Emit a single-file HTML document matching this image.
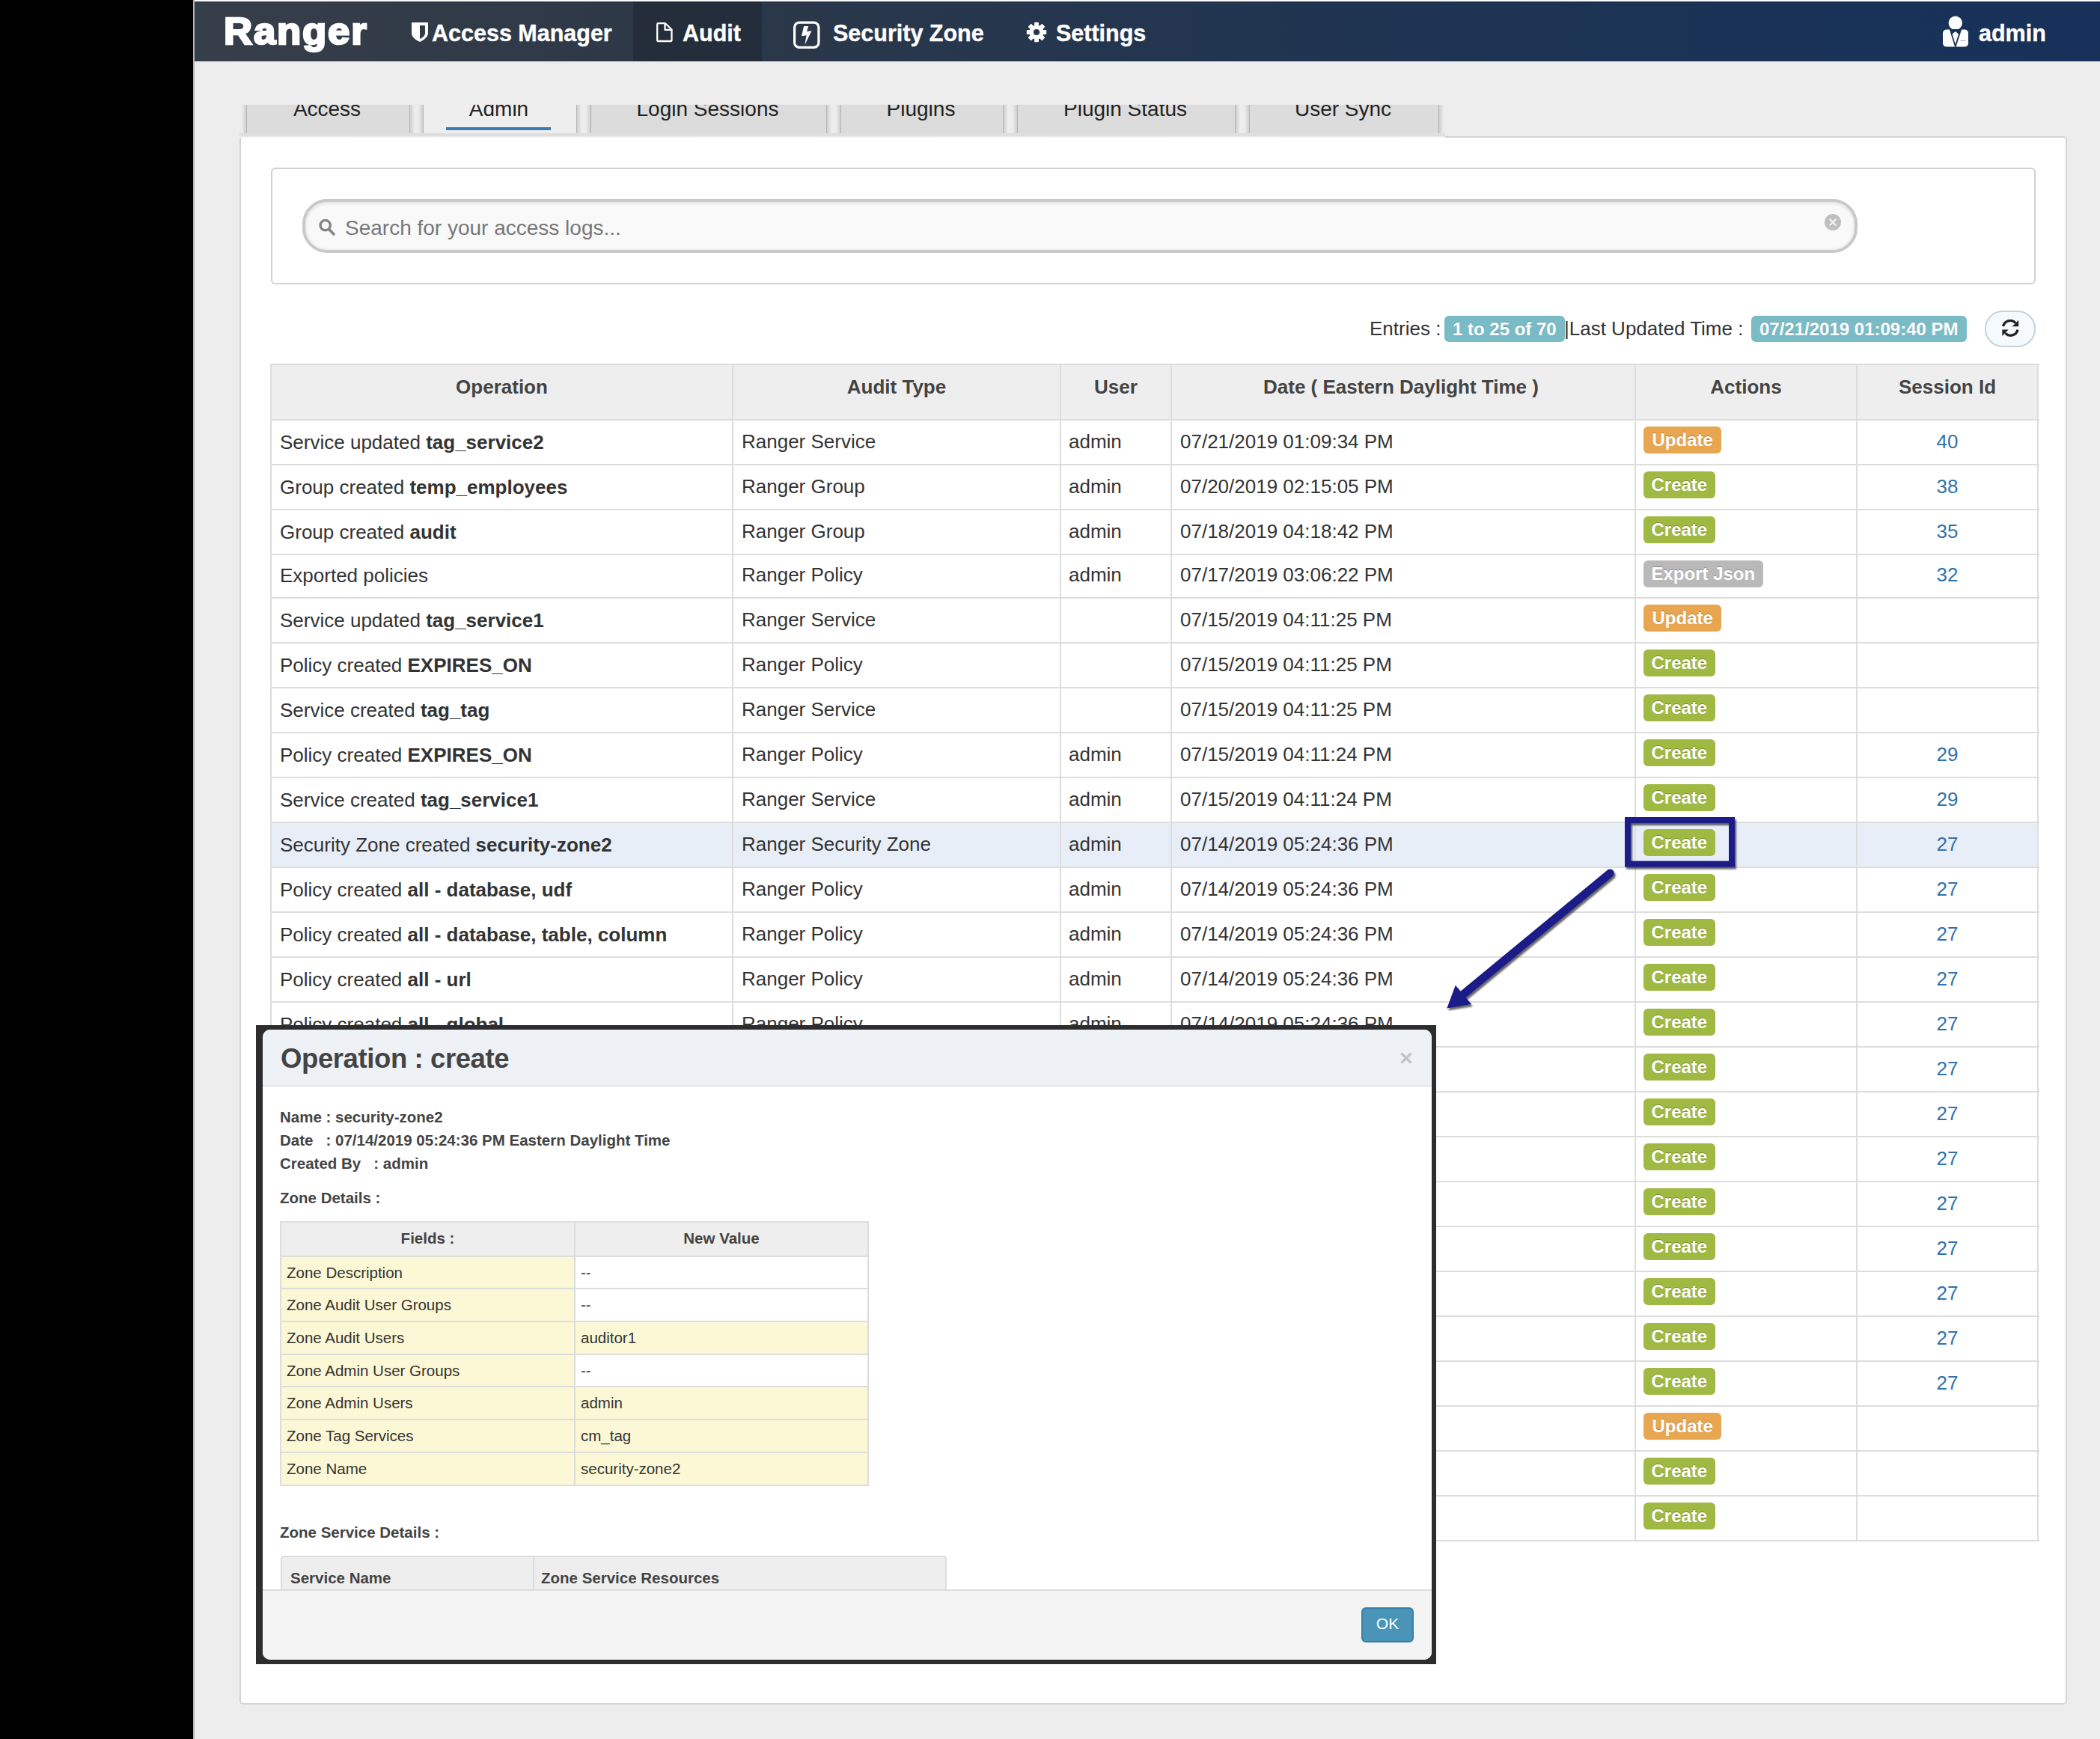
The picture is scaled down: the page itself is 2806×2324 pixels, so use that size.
<!DOCTYPE html>
<html><head><meta charset="utf-8">
<style>
*{box-sizing:border-box;}
html,body{margin:0;padding:0;}
body{width:2806px;height:2324px;overflow:hidden;position:relative;background:#ededed;font-family:"Liberation Sans",sans-serif;color:#333;}
.abs{position:absolute;}
#blk{position:absolute;left:0;top:0;width:258px;height:2324px;background:#000;}
#gline{position:absolute;left:258px;top:0;width:2px;height:2324px;background:#b4b4b4;}
#topl{position:absolute;left:260px;top:0;width:2546px;height:2px;background:#fbfbfb;}
#nav{position:absolute;left:260px;top:2px;width:2546px;height:80px;background:linear-gradient(90deg,#363e49 0%,#2d3847 25%,#25364e 45%,#1c3353 70%,#17315a 100%);border-top:1px solid rgba(0,0,0,0.25);}
#nav .it{position:absolute;color:#fff;font-weight:bold;white-space:nowrap;}
#audact{position:absolute;left:846px;top:2px;width:172px;height:80px;background:rgba(0,0,0,0.18);}
.tab{position:absolute;top:140px;height:38px;background:#dcdcdc;overflow:visible;font-size:28px;color:#222;text-align:center;line-height:30px;}
.tab span{position:absolute;left:-3px;right:0;top:0;height:38px;overflow:hidden;}
.tab span i{font-style:normal;position:relative;top:-9px;}
.tab .sl{position:absolute;left:-6px;top:0;width:6px;height:38px;background:linear-gradient(90deg,rgba(0,0,0,0),rgba(0,0,0,0.13));}
.tab .sr{position:absolute;right:-6px;top:0;width:6px;height:38px;background:linear-gradient(90deg,rgba(0,0,0,0.13),rgba(0,0,0,0));}
.tab:before,.tab:after{content:"";position:absolute;top:0;bottom:0;width:1px;background:#b5b5b5;}
.tab:before{left:0;}
.tab:after{right:0;}
.tab.act{background:#eeeeee;}
#tabstrip{position:absolute;left:320px;top:178px;width:1611px;height:6px;background:linear-gradient(180deg,#dfdfdf 0,#dfdfdf 4px,#f3f3f3 5px,#fafafa 6px);}
#panel{position:absolute;left:320px;top:182px;width:2442px;height:2096px;background:#fff;border:2px solid #d4d4d4;border-radius:5px;}
#sbox{position:absolute;left:362px;top:224px;width:2358px;height:156px;border:2px solid #d0d0d0;border-radius:6px;background:#fff;}
#sinput{position:absolute;left:404px;top:266px;width:2078px;height:72px;border:4px solid #c9c9c9;border-radius:33px;background:#f9f9f9;box-shadow:inset 0 1px 5px rgba(0,0,0,0.13);}
#sph{position:absolute;left:461px;top:287.5px;font-size:28px;color:#777;white-space:nowrap;line-height:34px;}
.hline{position:absolute;height:2px;background:#dddddd;}
.vline{position:absolute;width:2px;background:#dddddd;}
.thbg{position:absolute;background:#eeeeee;}
.hl{position:absolute;background:#e8eef8;}
.th{position:absolute;height:60px;line-height:30px;padding-top:16px;text-align:center;font-weight:bold;font-size:26px;color:#444;white-space:nowrap;}
.td{position:absolute;font-size:26px;line-height:30px;color:#333;white-space:nowrap;}
.td b{color:#333;}
.sid{text-align:center;color:#2f72ad;}
.lbl{position:absolute;height:36px;line-height:36px;padding:0 10.5px;border-radius:6px;color:#fff;font-weight:bold;font-size:24px;white-space:nowrap;text-shadow:0 -1px 0 rgba(0,0,0,0.25);}
.ls{background:#a0b943;}
.lw{background:#e7a64f;padding:0 11.5px;}
.ld{background:#b9b9b9;}
.badge{position:absolute;height:35px;line-height:35px;padding:0 11px;border-radius:6px;background:#7abcc6;color:#fff;font-weight:bold;font-size:24px;white-space:nowrap;text-shadow:0 -1px 0 rgba(0,0,0,0.2);}
#entries{position:absolute;top:424px;font-size:26px;line-height:30px;color:#333;white-space:nowrap;}
#refresh{position:absolute;left:2652px;top:415px;width:68px;height:49px;border:2px solid #c5d3dc;border-radius:24px;background:#f6fafd;}
/* modal */
#mframe{position:absolute;left:342px;top:1370px;width:1577px;height:854px;background:#2d2d2d;}
#modal{position:absolute;left:351px;top:1376px;width:1562px;height:842px;background:#fff;border-radius:10px;overflow:hidden;}
#mhead{position:absolute;left:0;top:0;width:100%;height:76px;background:#eef2f7;border-bottom:2px solid #e5e5e5;}
#mtitle{position:absolute;left:24px;top:17px;letter-spacing:-0.4px;font-size:36.5px;font-weight:bold;color:#444;line-height:44px;white-space:nowrap;}
#mclose{position:absolute;right:26px;top:22px;}
.mb{position:absolute;left:23px;font-size:20.5px;font-weight:bold;color:#444;white-space:nowrap;line-height:24px;}
.zt{position:absolute;}
.zc{position:absolute;font-size:20.5px;line-height:24px;color:#333;white-space:nowrap;}
#mfoot{position:absolute;left:0;top:748px;width:100%;height:94px;background:#f4f4f4;border-top:2px solid #dddddd;}
#okbtn{position:absolute;left:1468px;top:22px;width:70px;height:47px;background:#4a94b8;border:2px solid #3b7fa8;border-radius:6px;color:#fff;font-size:21px;text-align:center;line-height:40px;}
</style></head><body>
<div id="blk"></div>
<div id="gline"></div>
<div id="topl"></div>
<div id="nav"></div>
<div id="audact"></div>
<div class="abs" style="left:299px;top:12px;font-size:50px;font-weight:bold;color:#fff;letter-spacing:1.7px;line-height:60px;-webkit-text-stroke:2.6px #fff;transform:scaleX(1.055);transform-origin:0 0;">Ranger</div>
<!--NAVITEMS-->
<div id="nitems">
 <div class="abs" style="left:577px;top:26px;font-size:30.5px;font-weight:bold;color:#fff;line-height:36px;-webkit-text-stroke:0.4px #fff;white-space:nowrap;">Access Manager</div>
 <div class="abs" style="left:912px;top:26px;font-size:30.5px;font-weight:bold;color:#fff;line-height:36px;-webkit-text-stroke:0.4px #fff;white-space:nowrap;">Audit</div>
 <div class="abs" style="left:1113px;top:26px;font-size:30.5px;font-weight:bold;color:#fff;line-height:36px;-webkit-text-stroke:0.4px #fff;white-space:nowrap;">Security Zone</div>
 <div class="abs" style="left:1411px;top:26px;font-size:30.5px;font-weight:bold;color:#fff;line-height:36px;-webkit-text-stroke:0.4px #fff;white-space:nowrap;">Settings</div>
 <div class="abs" style="left:2644px;top:26px;font-size:30.5px;font-weight:bold;color:#fff;line-height:36px;-webkit-text-stroke:0.4px #fff;white-space:nowrap;">admin</div>
</div>

<svg class="abs" style="left:550px;top:30px;" width="22" height="26" viewBox="0 0 22 26"><path fill="#fff" fill-rule="evenodd" d="M0,0 H22 V14 C22,20 16,23.5 11,26 C6,23.5 0,20 0,14 Z M11,4 H18 V14 C18,18 14.5,20.5 11,22 Z"/></svg>
<svg class="abs" style="left:876px;top:29px;" width="24" height="28" viewBox="0 0 24 28"><path fill="none" stroke="#fff" stroke-width="2.3" stroke-linejoin="round" d="M2.2,3.5 Q2.2,2.2 3.5,2.2 H13 L21.5,10.5 V24.5 Q21.5,26 20,26 H3.5 Q2.2,26 2.2,24.5 Z M12.5,2.2 V10.8 H21.5"/></svg>
<svg class="abs" style="left:1059px;top:28px;" width="37" height="37" viewBox="0 0 37 37"><rect x="2.6" y="2.1" width="32.3" height="33.3" rx="6.5" fill="none" stroke="#fff" stroke-width="3.2"/><path fill="#fff" d="M15.1,7 L21.2,7 L19,14.1 L25.5,13.3 L16.3,32 L18.6,19.3 L12,20.2 Z"/></svg>
<svg class="abs" style="left:1371px;top:29px;" width="28" height="28" viewBox="0 0 28 28"><defs><mask id="gm"><rect width="28" height="28" fill="#fff"/><circle cx="14" cy="14" r="4.1" fill="#000"/></mask></defs><g fill="#fff" mask="url(#gm)"><circle cx="14" cy="14" r="9.6"/><rect x="11.1" y="0.8" width="5.8" height="26.4" rx="0.6"/><rect x="11.1" y="0.8" width="5.8" height="26.4" rx="0.6" transform="rotate(45 14 14)"/><rect x="11.1" y="0.8" width="5.8" height="26.4" rx="0.6" transform="rotate(90 14 14)"/><rect x="11.1" y="0.8" width="5.8" height="26.4" rx="0.6" transform="rotate(135 14 14)"/></g></svg>
<svg class="abs" style="left:2595px;top:21px;" width="36" height="43" viewBox="0 0 36 43"><circle cx="17.8" cy="9.8" r="9.2" fill="#fff"/><rect x="1" y="18.4" width="34" height="23.2" rx="5" fill="#fff"/><path fill="#17304f" d="M9.8,18 L26.2,18 L18.4,42 L17.2,42 Z"/><path fill="#fff" d="M17.8,21 L22,24.6 L18,37.5 L17.6,37.5 L13.6,24.6 Z"/><rect x="24.6" y="33" width="6.8" height="0.9" fill="#9aa6b5"/></svg>


<div id="panel"></div>
<div id="tabstrip"></div>
<div class="tab" style="left:329px;width:219px;"><span><i>Access</i></span><b class="sl"></b><b class="sr"></b></div>
<div class="tab act" style="left:565px;width:206px;"><span><i>Admin</i></span><b class="sl"></b><b class="sr"></b></div>
<div class="abs" style="left:596px;top:170px;width:140px;height:4px;background:#3a7db5;"></div>
<div class="tab" style="left:789px;width:316px;"><span><i>Login Sessions</i></span><b class="sl"></b><b class="sr"></b></div>
<div class="tab" style="left:1123px;width:218px;"><span><i>Plugins</i></span><b class="sl"></b><b class="sr"></b></div>
<div class="tab" style="left:1359px;width:292px;"><span><i>Plugin Status</i></span><b class="sl"></b><b class="sr"></b></div>
<div class="tab" style="left:1669px;width:254px;"><span><i>User Sync</i></span><b class="sl"></b><b class="sr"></b></div>

<div id="sbox"></div>
<div id="sinput"></div>
<div id="sph">Search for your access logs...</div>

<div id="entries" style="left:1830px;">Entries :</div>
<div class="badge" style="left:1930px;top:422px;">1 to 25 of 70</div>
<div id="entries" style="left:2090px;">|Last Updated Time :</div>
<div class="badge" style="left:2340px;top:422px;">07/21/2019 01:09:40 PM</div>
<div id="refresh"></div>
<svg class="abs" style="left:423px;top:290px;" width="28" height="28" viewBox="0 0 28 28"><circle cx="11.7" cy="11.1" r="6.7" fill="none" stroke="#858585" stroke-width="3.4"/><path d="M16.5,16.2 L23,23" stroke="#858585" stroke-width="3.6" stroke-linecap="round"/></svg>
<svg class="abs" style="left:2437px;top:285px;" width="24" height="24" viewBox="0 0 24 24"><circle cx="12" cy="12" r="11" fill="#bfbfbf"/><path d="M8.3,8.3 L15.7,15.7 M15.7,8.3 L8.3,15.7" stroke="#f4f4f4" stroke-width="2.3" stroke-linecap="round"/></svg>
<svg class="abs" style="left:2675px;top:427px;" width="23" height="23" viewBox="0 0 23 23"><g fill="#222"><path d="M1.6,9.2 A9.7,9.7 0 0 1 18.2,4.6" fill="none" stroke="#222" stroke-width="3.3"/><path d="M22.2,0.8 V9.3 H13.8 Z"/><path d="M21,13.6 A9.7,9.7 0 0 1 4.4,18.2" fill="none" stroke="#222" stroke-width="3.3"/><path d="M0.3,22 V13.5 H8.7 Z"/></g></svg>


<div class="thbg" style="left:362px;top:486px;width:2361px;height:75px"></div>
<div class="hl" style="left:362px;top:1099px;width:2361px;height:60px"></div>
<div class="hline" style="left:362px;top:486px;width:2363px"></div>
<div class="hline" style="left:362px;top:560px;width:2363px"></div>
<div class="hline" style="left:362px;top:620px;width:2363px"></div>
<div class="hline" style="left:362px;top:680px;width:2363px"></div>
<div class="hline" style="left:362px;top:740px;width:2363px"></div>
<div class="hline" style="left:362px;top:798px;width:2363px"></div>
<div class="hline" style="left:362px;top:858px;width:2363px"></div>
<div class="hline" style="left:362px;top:918px;width:2363px"></div>
<div class="hline" style="left:362px;top:978px;width:2363px"></div>
<div class="hline" style="left:362px;top:1038px;width:2363px"></div>
<div class="hline" style="left:362px;top:1098px;width:2363px"></div>
<div class="hline" style="left:362px;top:1158px;width:2363px"></div>
<div class="hline" style="left:362px;top:1218px;width:2363px"></div>
<div class="hline" style="left:362px;top:1278px;width:2363px"></div>
<div class="hline" style="left:362px;top:1338px;width:2363px"></div>
<div class="hline" style="left:362px;top:1398px;width:2363px"></div>
<div class="hline" style="left:362px;top:1458px;width:2363px"></div>
<div class="hline" style="left:362px;top:1518px;width:2363px"></div>
<div class="hline" style="left:362px;top:1578px;width:2363px"></div>
<div class="hline" style="left:362px;top:1638px;width:2363px"></div>
<div class="hline" style="left:362px;top:1698px;width:2363px"></div>
<div class="hline" style="left:362px;top:1758px;width:2363px"></div>
<div class="hline" style="left:362px;top:1818px;width:2363px"></div>
<div class="hline" style="left:362px;top:1878px;width:2363px"></div>
<div class="hline" style="left:362px;top:1938px;width:2363px"></div>
<div class="hline" style="left:362px;top:1998px;width:2363px"></div>
<div class="hline" style="left:362px;top:2058px;width:2363px"></div>
<div class="vline" style="left:361px;top:486px;height:1574px"></div>
<div class="vline" style="left:978px;top:486px;height:1574px"></div>
<div class="vline" style="left:1416px;top:486px;height:1574px"></div>
<div class="vline" style="left:1564px;top:486px;height:1574px"></div>
<div class="vline" style="left:2184px;top:486px;height:1574px"></div>
<div class="vline" style="left:2480px;top:486px;height:1574px"></div>
<div class="vline" style="left:2722px;top:486px;height:1574px"></div>
<div class="th" style="left:362px;width:617px;top:486px">Operation</div>
<div class="th" style="left:979px;width:438px;top:486px">Audit Type</div>
<div class="th" style="left:1417px;width:148px;top:486px">User</div>
<div class="th" style="left:1562px;width:620px;top:486px">Date ( Eastern Daylight Time )</div>
<div class="th" style="left:2185px;width:296px;top:486px">Actions</div>
<div class="th" style="left:2481px;width:242px;top:486px">Session Id</div>
<div class="td" style="left:374px;top:576px">Service updated <b>tag_service2</b></div>
<div class="td" style="left:991px;top:575px">Ranger Service</div>
<div class="td" style="left:1428px;top:575px">admin</div>
<div class="td" style="left:1577px;top:575px">07/21/2019 01:09:34 PM</div>
<div class="lbl lw" style="left:2196px;top:570px">Update</div>
<div class="td sid" style="left:2481px;width:242px;top:575px">40</div>
<div class="td" style="left:374px;top:636px">Group created <b>temp_employees</b></div>
<div class="td" style="left:991px;top:635px">Ranger Group</div>
<div class="td" style="left:1428px;top:635px">admin</div>
<div class="td" style="left:1577px;top:635px">07/20/2019 02:15:05 PM</div>
<div class="lbl ls" style="left:2196px;top:630px">Create</div>
<div class="td sid" style="left:2481px;width:242px;top:635px">38</div>
<div class="td" style="left:374px;top:696px">Group created <b>audit</b></div>
<div class="td" style="left:991px;top:695px">Ranger Group</div>
<div class="td" style="left:1428px;top:695px">admin</div>
<div class="td" style="left:1577px;top:695px">07/18/2019 04:18:42 PM</div>
<div class="lbl ls" style="left:2196px;top:690px">Create</div>
<div class="td sid" style="left:2481px;width:242px;top:695px">35</div>
<div class="td" style="left:374px;top:754px">Exported policies</div>
<div class="td" style="left:991px;top:753px">Ranger Policy</div>
<div class="td" style="left:1428px;top:753px">admin</div>
<div class="td" style="left:1577px;top:753px">07/17/2019 03:06:22 PM</div>
<div class="lbl ld" style="left:2196px;top:749px">Export Json</div>
<div class="td sid" style="left:2481px;width:242px;top:753px">32</div>
<div class="td" style="left:374px;top:814px">Service updated <b>tag_service1</b></div>
<div class="td" style="left:991px;top:813px">Ranger Service</div>
<div class="td" style="left:1577px;top:813px">07/15/2019 04:11:25 PM</div>
<div class="lbl lw" style="left:2196px;top:808px">Update</div>
<div class="td" style="left:374px;top:874px">Policy created <b>EXPIRES_ON</b></div>
<div class="td" style="left:991px;top:873px">Ranger Policy</div>
<div class="td" style="left:1577px;top:873px">07/15/2019 04:11:25 PM</div>
<div class="lbl ls" style="left:2196px;top:868px">Create</div>
<div class="td" style="left:374px;top:934px">Service created <b>tag_tag</b></div>
<div class="td" style="left:991px;top:933px">Ranger Service</div>
<div class="td" style="left:1577px;top:933px">07/15/2019 04:11:25 PM</div>
<div class="lbl ls" style="left:2196px;top:928px">Create</div>
<div class="td" style="left:374px;top:994px">Policy created <b>EXPIRES_ON</b></div>
<div class="td" style="left:991px;top:993px">Ranger Policy</div>
<div class="td" style="left:1428px;top:993px">admin</div>
<div class="td" style="left:1577px;top:993px">07/15/2019 04:11:24 PM</div>
<div class="lbl ls" style="left:2196px;top:988px">Create</div>
<div class="td sid" style="left:2481px;width:242px;top:993px">29</div>
<div class="td" style="left:374px;top:1054px">Service created <b>tag_service1</b></div>
<div class="td" style="left:991px;top:1053px">Ranger Service</div>
<div class="td" style="left:1428px;top:1053px">admin</div>
<div class="td" style="left:1577px;top:1053px">07/15/2019 04:11:24 PM</div>
<div class="lbl ls" style="left:2196px;top:1048px">Create</div>
<div class="td sid" style="left:2481px;width:242px;top:1053px">29</div>
<div class="td" style="left:374px;top:1114px">Security Zone created <b>security-zone2</b></div>
<div class="td" style="left:991px;top:1113px">Ranger Security Zone</div>
<div class="td" style="left:1428px;top:1113px">admin</div>
<div class="td" style="left:1577px;top:1113px">07/14/2019 05:24:36 PM</div>
<div class="lbl ls" style="left:2196px;top:1108px">Create</div>
<div class="td sid" style="left:2481px;width:242px;top:1113px">27</div>
<div class="td" style="left:374px;top:1174px">Policy created <b>all - database, udf</b></div>
<div class="td" style="left:991px;top:1173px">Ranger Policy</div>
<div class="td" style="left:1428px;top:1173px">admin</div>
<div class="td" style="left:1577px;top:1173px">07/14/2019 05:24:36 PM</div>
<div class="lbl ls" style="left:2196px;top:1168px">Create</div>
<div class="td sid" style="left:2481px;width:242px;top:1173px">27</div>
<div class="td" style="left:374px;top:1234px">Policy created <b>all - database, table, column</b></div>
<div class="td" style="left:991px;top:1233px">Ranger Policy</div>
<div class="td" style="left:1428px;top:1233px">admin</div>
<div class="td" style="left:1577px;top:1233px">07/14/2019 05:24:36 PM</div>
<div class="lbl ls" style="left:2196px;top:1228px">Create</div>
<div class="td sid" style="left:2481px;width:242px;top:1233px">27</div>
<div class="td" style="left:374px;top:1294px">Policy created <b>all - url</b></div>
<div class="td" style="left:991px;top:1293px">Ranger Policy</div>
<div class="td" style="left:1428px;top:1293px">admin</div>
<div class="td" style="left:1577px;top:1293px">07/14/2019 05:24:36 PM</div>
<div class="lbl ls" style="left:2196px;top:1288px">Create</div>
<div class="td sid" style="left:2481px;width:242px;top:1293px">27</div>
<div class="td" style="left:374px;top:1354px">Policy created <b>all - global</b></div>
<div class="td" style="left:991px;top:1353px">Ranger Policy</div>
<div class="td" style="left:1428px;top:1353px">admin</div>
<div class="td" style="left:1577px;top:1353px">07/14/2019 05:24:36 PM</div>
<div class="lbl ls" style="left:2196px;top:1348px">Create</div>
<div class="td sid" style="left:2481px;width:242px;top:1353px">27</div>
<div class="td" style="left:374px;top:1414px">Policy created <b>all - hdfs</b></div>
<div class="td" style="left:991px;top:1413px">Ranger Policy</div>
<div class="td" style="left:1428px;top:1413px">admin</div>
<div class="td" style="left:1577px;top:1413px">07/14/2019 05:24:36 PM</div>
<div class="lbl ls" style="left:2196px;top:1408px">Create</div>
<div class="td sid" style="left:2481px;width:242px;top:1413px">27</div>
<div class="td" style="left:374px;top:1474px">Policy created <b>all - hdfs</b></div>
<div class="td" style="left:991px;top:1473px">Ranger Policy</div>
<div class="td" style="left:1428px;top:1473px">admin</div>
<div class="td" style="left:1577px;top:1473px">07/14/2019 05:24:36 PM</div>
<div class="lbl ls" style="left:2196px;top:1468px">Create</div>
<div class="td sid" style="left:2481px;width:242px;top:1473px">27</div>
<div class="td" style="left:374px;top:1534px">Policy created <b>all - hdfs</b></div>
<div class="td" style="left:991px;top:1533px">Ranger Policy</div>
<div class="td" style="left:1428px;top:1533px">admin</div>
<div class="td" style="left:1577px;top:1533px">07/14/2019 05:24:36 PM</div>
<div class="lbl ls" style="left:2196px;top:1528px">Create</div>
<div class="td sid" style="left:2481px;width:242px;top:1533px">27</div>
<div class="td" style="left:374px;top:1594px">Policy created <b>all - hdfs</b></div>
<div class="td" style="left:991px;top:1593px">Ranger Policy</div>
<div class="td" style="left:1428px;top:1593px">admin</div>
<div class="td" style="left:1577px;top:1593px">07/14/2019 05:24:36 PM</div>
<div class="lbl ls" style="left:2196px;top:1588px">Create</div>
<div class="td sid" style="left:2481px;width:242px;top:1593px">27</div>
<div class="td" style="left:374px;top:1654px">Policy created <b>all - hdfs</b></div>
<div class="td" style="left:991px;top:1653px">Ranger Policy</div>
<div class="td" style="left:1428px;top:1653px">admin</div>
<div class="td" style="left:1577px;top:1653px">07/14/2019 05:24:36 PM</div>
<div class="lbl ls" style="left:2196px;top:1648px">Create</div>
<div class="td sid" style="left:2481px;width:242px;top:1653px">27</div>
<div class="td" style="left:374px;top:1714px">Policy created <b>all - hdfs</b></div>
<div class="td" style="left:991px;top:1713px">Ranger Policy</div>
<div class="td" style="left:1428px;top:1713px">admin</div>
<div class="td" style="left:1577px;top:1713px">07/14/2019 05:24:36 PM</div>
<div class="lbl ls" style="left:2196px;top:1708px">Create</div>
<div class="td sid" style="left:2481px;width:242px;top:1713px">27</div>
<div class="td" style="left:374px;top:1774px">Policy created <b>all - hdfs</b></div>
<div class="td" style="left:991px;top:1773px">Ranger Policy</div>
<div class="td" style="left:1428px;top:1773px">admin</div>
<div class="td" style="left:1577px;top:1773px">07/14/2019 05:24:36 PM</div>
<div class="lbl ls" style="left:2196px;top:1768px">Create</div>
<div class="td sid" style="left:2481px;width:242px;top:1773px">27</div>
<div class="td" style="left:374px;top:1834px">Policy created <b>all - hdfs</b></div>
<div class="td" style="left:991px;top:1833px">Ranger Policy</div>
<div class="td" style="left:1428px;top:1833px">admin</div>
<div class="td" style="left:1577px;top:1833px">07/14/2019 05:24:36 PM</div>
<div class="lbl ls" style="left:2196px;top:1828px">Create</div>
<div class="td sid" style="left:2481px;width:242px;top:1833px">27</div>
<div class="td" style="left:374px;top:1894px">Service updated <b>cm_hdfs</b></div>
<div class="td" style="left:991px;top:1893px">Ranger Service</div>
<div class="td" style="left:1428px;top:1893px">admin</div>
<div class="td" style="left:1577px;top:1893px">07/14/2019 05:24:36 PM</div>
<div class="lbl lw" style="left:2196px;top:1888px">Update</div>
<div class="td" style="left:374px;top:1954px">Policy created <b>all - path</b></div>
<div class="td" style="left:991px;top:1953px">Ranger Policy</div>
<div class="td" style="left:1428px;top:1953px">admin</div>
<div class="td" style="left:1577px;top:1953px">07/14/2019 05:24:36 PM</div>
<div class="lbl ls" style="left:2196px;top:1948px">Create</div>
<div class="td" style="left:374px;top:2014px">Policy created <b>all - path</b></div>
<div class="td" style="left:991px;top:2013px">Ranger Policy</div>
<div class="td" style="left:1428px;top:2013px">admin</div>
<div class="td" style="left:1577px;top:2013px">07/14/2019 05:24:36 PM</div>
<div class="lbl ls" style="left:2196px;top:2008px">Create</div>

<div id="mframe"></div>
<div id="modal">
 <div id="mhead"><div id="mtitle">Operation : create</div><svg class="abs" style="left:1519px;top:29px;" width="18" height="18" viewBox="0 0 18 18"><path d="M2.5,2.5 L15.5,15.5 M15.5,2.5 L2.5,15.5" stroke="#c4c4c4" stroke-width="3.6"/></svg></div>
 <div class="mb" style="top:105px;">Name : security-zone2</div>
 <div class="mb" style="top:136px;">Date &nbsp;&nbsp;: 07/14/2019 05:24:36 PM Eastern Daylight Time</div>
 <div class="mb" style="top:167px;">Created By &nbsp;&nbsp;: admin</div>
 <div class="mb" style="top:213px;">Zone Details :</div>
 <div class="abs" style="left:24px;top:257px;width:785px;height:46px;background:#eeeeee;"></div>
<div class="abs" style="left:24px;top:303px;width:393px;height:43px;background:#fcf7d4;"></div>
<div class="abs" style="left:24px;top:346px;width:393px;height:44px;background:#fcf7d4;"></div>
<div class="abs" style="left:24px;top:390px;width:393px;height:44px;background:#fcf7d4;"></div>
<div class="abs" style="left:417px;top:390px;width:392px;height:44px;background:#fcf7d4;"></div>
<div class="abs" style="left:24px;top:434px;width:393px;height:43px;background:#fcf7d4;"></div>
<div class="abs" style="left:24px;top:477px;width:393px;height:44px;background:#fcf7d4;"></div>
<div class="abs" style="left:417px;top:477px;width:392px;height:44px;background:#fcf7d4;"></div>
<div class="abs" style="left:24px;top:521px;width:393px;height:44px;background:#fcf7d4;"></div>
<div class="abs" style="left:417px;top:521px;width:392px;height:44px;background:#fcf7d4;"></div>
<div class="abs" style="left:24px;top:565px;width:393px;height:44px;background:#fcf7d4;"></div>
<div class="abs" style="left:417px;top:565px;width:392px;height:44px;background:#fcf7d4;"></div>
<div class="hline" style="left:24px;top:256px;width:786px;"></div>
<div class="hline" style="left:24px;top:302px;width:786px;"></div>
<div class="hline" style="left:24px;top:345px;width:786px;"></div>
<div class="hline" style="left:24px;top:389px;width:786px;"></div>
<div class="hline" style="left:24px;top:433px;width:786px;"></div>
<div class="hline" style="left:24px;top:476px;width:786px;"></div>
<div class="hline" style="left:24px;top:520px;width:786px;"></div>
<div class="hline" style="left:24px;top:564px;width:786px;"></div>
<div class="hline" style="left:24px;top:608px;width:786px;"></div>
<div class="vline" style="left:23px;top:256px;height:354px;"></div>
<div class="vline" style="left:416px;top:256px;height:354px;"></div>
<div class="vline" style="left:808px;top:256px;height:354px;"></div>
<div class="zc" style="left:24px;width:393px;top:267px;text-align:center;font-weight:bold;color:#444;">Fields :</div>
<div class="zc" style="left:417px;width:392px;top:267px;text-align:center;font-weight:bold;color:#444;">New Value</div>
<div class="zc" style="left:32px;top:313px;">Zone Description</div>
<div class="zc" style="left:425px;top:313px;">--</div>
<div class="zc" style="left:32px;top:356px;">Zone Audit User Groups</div>
<div class="zc" style="left:425px;top:356px;">--</div>
<div class="zc" style="left:32px;top:400px;">Zone Audit Users</div>
<div class="zc" style="left:425px;top:400px;">auditor1</div>
<div class="zc" style="left:32px;top:444px;">Zone Admin User Groups</div>
<div class="zc" style="left:425px;top:444px;">--</div>
<div class="zc" style="left:32px;top:487px;">Zone Admin Users</div>
<div class="zc" style="left:425px;top:487px;">admin</div>
<div class="zc" style="left:32px;top:531px;">Zone Tag Services</div>
<div class="zc" style="left:425px;top:531px;">cm_tag</div>
<div class="zc" style="left:32px;top:575px;">Zone Name</div>
<div class="zc" style="left:425px;top:575px;">security-zone2</div>
 <div class="mb" style="top:660px;">Zone Service Details :</div>
 <div class="abs" style="left:24px;top:703px;width:890px;height:60px;background:#eeeeee;border:2px solid #dddddd;border-radius:4px 4px 0 0;"></div>
<div class="vline" style="left:361px;top:703px;height:60px;"></div>
<div class="zc" style="left:37px;top:721px;font-weight:bold;color:#444;">Service Name</div>
<div class="zc" style="left:372px;top:721px;font-weight:bold;color:#444;">Zone Service Resources</div>
 <div id="mfoot"><div id="okbtn">OK</div></div>
</div>

<svg class="abs" style="left:1900px;top:1080px;overflow:visible;" width="440" height="300" viewBox="1900 1080 440 300">
<defs><filter id="sh" x="-20%" y="-20%" width="140%" height="140%"><feGaussianBlur in="SourceAlpha" stdDeviation="1.2"/><feOffset dx="2" dy="2.5"/><feComponentTransfer><feFuncA type="linear" slope="0.6"/></feComponentTransfer><feMerge><feMergeNode/><feMergeNode in="SourceGraphic"/></feMerge></filter></defs>
<g filter="url(#sh)">
<rect x="2175" y="1096" width="139" height="58.6" fill="none" stroke="#1c1a88" stroke-width="8"/>
<path d="M2151.3,1166.9 L1955,1329" stroke="#1c1a88" stroke-width="11" stroke-linecap="round"/>
<path d="M1944.8,1316.7 L1965.9,1342 L1933.3,1347.5 Z" fill="#1c1a88"/>
</g>
</svg>

</body></html>
